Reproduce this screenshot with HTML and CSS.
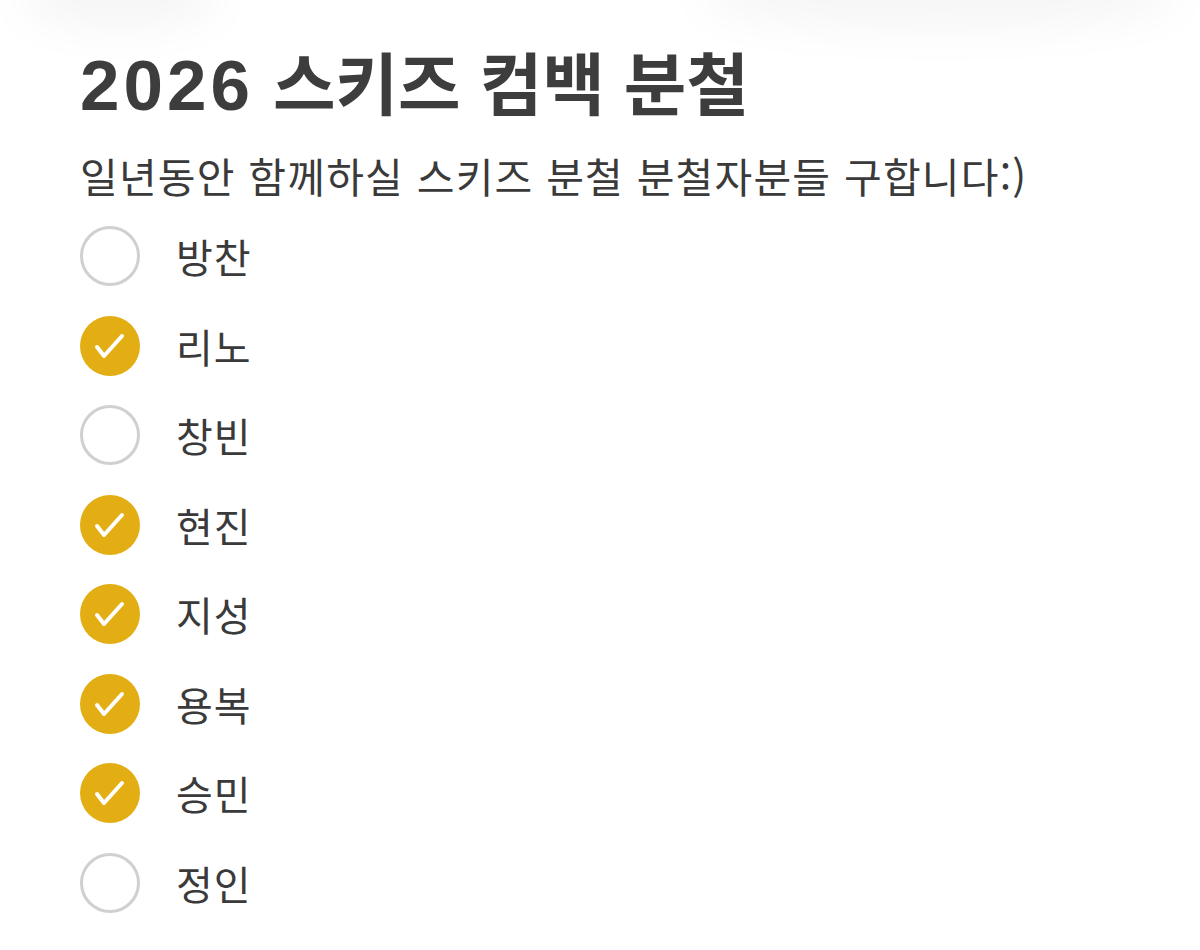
FILE: index.html
```html
<!DOCTYPE html>
<html lang="ko">
<head>
<meta charset="utf-8">
<link rel="stylesheet" href="styles.css">
</head>
<body>
<div class="page">
  <div class="haze haze-left"></div>
  <div class="haze haze-right"></div>
  <h1 class="title"><span class="num">2026</span> 스키즈 컴백 분철</h1>
  <p class="subtitle">일년동안 함께하실 스키즈 분철 분철자분들 구합니다:)</p>
  <ul class="list">
    <li class="item"><span class="check"></span><span class="label">방찬</span></li>
    <li class="item"><span class="check on"><svg viewBox="0 0 60 60"><path d="M17 31 L24 40 L42 20"/></svg></span><span class="label">리노</span></li>
    <li class="item"><span class="check"></span><span class="label">창빈</span></li>
    <li class="item"><span class="check on"><svg viewBox="0 0 60 60"><path d="M17 31 L24 40 L42 20"/></svg></span><span class="label">현진</span></li>
    <li class="item"><span class="check on"><svg viewBox="0 0 60 60"><path d="M17 31 L24 40 L42 20"/></svg></span><span class="label">지성</span></li>
    <li class="item"><span class="check on"><svg viewBox="0 0 60 60"><path d="M17 31 L24 40 L42 20"/></svg></span><span class="label">용복</span></li>
    <li class="item"><span class="check on"><svg viewBox="0 0 60 60"><path d="M17 31 L24 40 L42 20"/></svg></span><span class="label">승민</span></li>
    <li class="item"><span class="check"></span><span class="label">정인</span></li>
  </ul>
</div>
</body>
</html>
```
FILE: styles.css
```css
html, body {
  margin: 0;
  padding: 0;
  background: #ffffff;
}
.page {
  position: relative;
  width: 1200px;
  height: 950px;
  overflow: hidden;
  padding: 0 0 0 80px;
  box-sizing: border-box;
  font-family: "Noto Sans CJK KR", "Noto Sans", sans-serif;
  color: #3a3a3a;
}
.haze {
  position: absolute;
  top: -40px;
  height: 70px;
  border-radius: 50%;
  filter: blur(20px);
  background: rgba(0, 0, 0, 0.035);
}
.haze-left { left: 20px; width: 200px; }
.haze-right { left: 700px; width: 480px; }
.title {
  position: relative;
  margin: 0;
  padding-top: 36px;
  font-size: 68px;
  line-height: 90px;
  font-weight: 700;
  color: #3d3d3d;
  font-family: "Noto Sans CJK KR", sans-serif;
}
.title .num {
  font-family: "Liberation Sans", sans-serif;
  font-size: 71px;
  letter-spacing: 4px;
}
.subtitle {
  margin: 16px 0 0;
  font-size: 41px;
  line-height: 56px;
  letter-spacing: 1.2px;
  color: #3a3a3a;
}
.list {
  list-style: none;
  margin: 23px 0 0;
  padding: 0;
  display: flex;
  flex-direction: column;
  gap: 29.5px;
}
.item {
  display: flex;
  align-items: center;
  height: 60px;
}
.check {
  width: 60px;
  height: 60px;
  box-sizing: border-box;
  border-radius: 50%;
  border: 3.5px solid #d0d0d0;
  flex: none;
  display: flex;
}
.check.on {
  border: none;
  background: #e3ae13;
}
.check svg {
  width: 60px;
  height: 60px;
}
.check path {
  fill: none;
  stroke: #ffffff;
  stroke-width: 4;
  stroke-linecap: round;
  stroke-linejoin: round;
}
.label {
  margin-left: 36px;
  font-size: 40px;
  line-height: 60px;
  letter-spacing: 1px;
  color: #3a3a3a;
}
```
